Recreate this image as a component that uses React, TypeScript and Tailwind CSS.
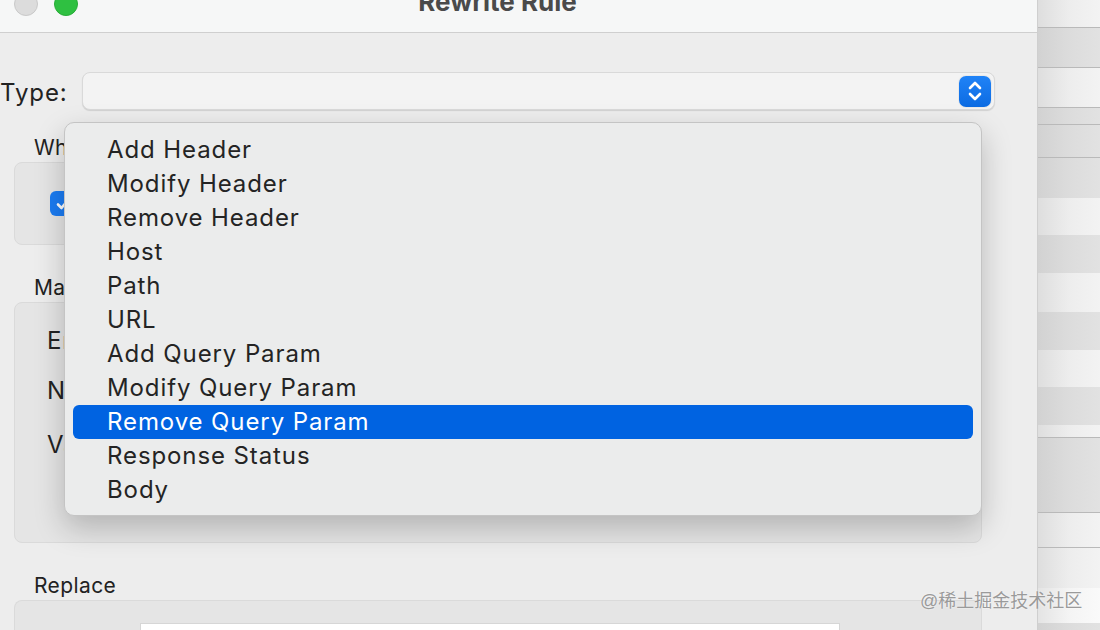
import React from 'react';

const menuItems = [
  'Add Header',
  'Modify Header',
  'Remove Header',
  'Host',
  'Path',
  'URL',
  'Add Query Param',
  'Modify Query Param',
  'Remove Query Param',
  'Response Status',
  'Body',
];

const selected = 'Remove Query Param';

// background list rows peeking out on the right of the sheet
const stripRows: { h: number; tone: 'light' | 'dark' | 'white'; line?: boolean }[] = [
  { h: 28, tone: 'light', line: true },
  { h: 40, tone: 'dark', line: true },
  { h: 40, tone: 'light', line: true },
  { h: 17, tone: 'dark', line: true },
  { h: 33, tone: 'dark', line: true },
  { h: 40, tone: 'dark' },
  { h: 37, tone: 'light' },
  { h: 38, tone: 'dark' },
  { h: 39, tone: 'light' },
  { h: 38, tone: 'dark' },
  { h: 37, tone: 'light' },
  { h: 38, tone: 'dark' },
  { h: 13, tone: 'light', line: true },
  { h: 75, tone: 'dark', line: true },
  { h: 35, tone: 'light', line: true },
  { h: 40, tone: 'light' },
  { h: 35, tone: 'white' },
  { h: 7, tone: 'dark' },
];

const toneClass = {
  light: 'bg-gradient-to-r from-[#dedede] via-[#ededed] to-[#f3f3f3]',
  dark: 'bg-gradient-to-r from-[#d2d2d2] via-[#dcdcdc] to-[#e2e2e2]',
  white: 'bg-gradient-to-r from-[#e4e4e4] via-[#f4f4f4] to-[#fafafa]',
};

const Stepper: React.FC = () => (
  <div className="w-[32px] h-[31px] rounded-[7px] bg-gradient-to-b from-[#2083f7] to-[#0b6be2] flex items-center justify-center shadow-[0_0_0_1px_rgba(0,0,0,0.04)]">
    <svg width="16" height="22" viewBox="0 0 16 22" fill="none" stroke="white" strokeWidth="2.6" strokeLinecap="round" strokeLinejoin="round">
      <path d="M3 8 L8 3 L13 8" />
      <path d="M3 14 L8 19 L13 14" />
    </svg>
  </div>
);

export default function App() {
  return (
    <div className="relative w-[1100px] h-[630px] flex overflow-hidden bg-[#ececec] text-[#222] font-['Inter','Liberation_Sans',sans-serif]">
      {/* Sheet window */}
      <div className="relative w-[1038px] h-full overflow-hidden bg-[#ededed] border-r border-[#cfcfcf] flex flex-col">
        {/* Title bar */}
        <div className="h-[33px] shrink-0 bg-[#f6f7f7] border-b border-[#cfcfcf] flex items-start overflow-hidden">
          <div className="flex gap-[16px] pl-[14px] -mt-[8px] shrink-0">
            <div className="w-[24px] h-[24px] rounded-full bg-[#dcdcdc] border border-[#c9c9c9]" />
            <div className="w-[24px] h-[24px] rounded-full bg-[#2fc041] border border-[#28ac38]" />
          </div>
          <div className="flex-1 flex justify-center -mt-[13px] pr-[120px]">
            <span className="text-[26px] font-bold text-[#4a4a4a] leading-[30px]">Rewrite Rule</span>
          </div>
        </div>

        {/* Type row */}
        <div className="shrink-0 flex items-center mt-[39px] pr-[42px] h-[38px]">
          <span className="w-[82px] text-[24px] leading-none tracking-[0.9px] pt-[3px]">Type:</span>
          <div className="flex-1 h-[38px] rounded-[8px] bg-[#f3f3f3] border border-[#d9d9d9] shadow-[0_1px_1px_rgba(0,0,0,0.12)] flex items-center justify-end pr-[3px]">
            <Stepper />
          </div>
        </div>

        {/* When group */}
        <div className="shrink-0 pl-[34px] mt-[26px] text-[21px] leading-[24px] tracking-[0.4px]">When</div>
        <div className="shrink-0 ml-[14px] w-[968px] h-[83px] mt-[2px] rounded-[8px] bg-[#e5e5e5] border border-[#dadada] flex items-center pl-[35px]">
          <div className="w-[25px] h-[25px] rounded-[6px] bg-[#1b7cf3] flex items-center justify-center">
            <svg width="16" height="16" viewBox="0 0 16 16" fill="none" stroke="white" strokeWidth="2.6" strokeLinecap="round" strokeLinejoin="round">
              <path d="M3 8.5 L6.5 12 L13 4" />
            </svg>
          </div>
        </div>

        {/* Match group */}
        <div className="shrink-0 pl-[34px] mt-[31px] text-[21px] leading-[24px] tracking-[0.4px]">Match</div>
        <div className="shrink-0 ml-[14px] w-[968px] h-[241px] mt-[2px] rounded-[8px] bg-[#e5e5e5] border border-[#dadada] flex flex-col pl-[32px] pt-[25px] gap-[24px] text-[24px] leading-[26px] tracking-[0.9px]">
          <span>Enabled</span>
          <span>Name</span>
          <span className="mt-[4px]">Value</span>
        </div>

        {/* Replace group */}
        <div className="shrink-0 pl-[34px] mt-[31px] text-[21px] leading-[24px] tracking-[0.4px]">Replace</div>
        <div className="shrink-0 ml-[14px] w-[968px] h-[60px] mt-[2px] rounded-t-[8px] bg-[#e5e5e5] border border-[#dadada] border-b-0 pl-[125px] pt-[22px]">
          <div className="w-[700px] h-[30px] bg-white border border-[#d6d6d6]" />
        </div>

        {/* Open popup menu */}
        <div className="absolute left-[64px] top-[122px] w-[918px] h-[394px] rounded-[10px] bg-[#ebecec] border border-[#c4c4c4] shadow-[0_12px_30px_rgba(0,0,0,0.22)] flex flex-col pt-[10px] px-[8px]">
          {menuItems.map((item) => (
            <div
              key={item}
              className={
                item === selected
                  ? 'h-[34px] flex items-center pl-[34px] rounded-[6px] bg-[#0063e1] text-white text-[24px] tracking-[0.9px]'
                  : 'h-[34px] flex items-center pl-[34px] text-[#242424] text-[24px] tracking-[0.9px]'
              }
            >
              {item}
            </div>
          ))}
        </div>
      </div>

      {/* Right strip: list behind the sheet */}
      <div className="w-[62px] h-full flex flex-col">
        {stripRows.map((r, i) => (
          <div
            key={i}
            style={{ height: r.h }}
            className={`shrink-0 ${toneClass[r.tone]} ${r.line ? 'border-b border-[#b9b9b9]' : ''}`}
          />
        ))}
      </div>

      {/* Watermark */}
      <div className="absolute left-[920px] top-[588px] text-[18px] text-[#9a9a9a] whitespace-nowrap font-['Liberation_Sans','Noto_Sans_CJK_SC',sans-serif] [text-shadow:0_0_2px_rgba(255,255,255,0.9)] z-10">
        @稀土掘金技术社区
      </div>
    </div>
  );
}
